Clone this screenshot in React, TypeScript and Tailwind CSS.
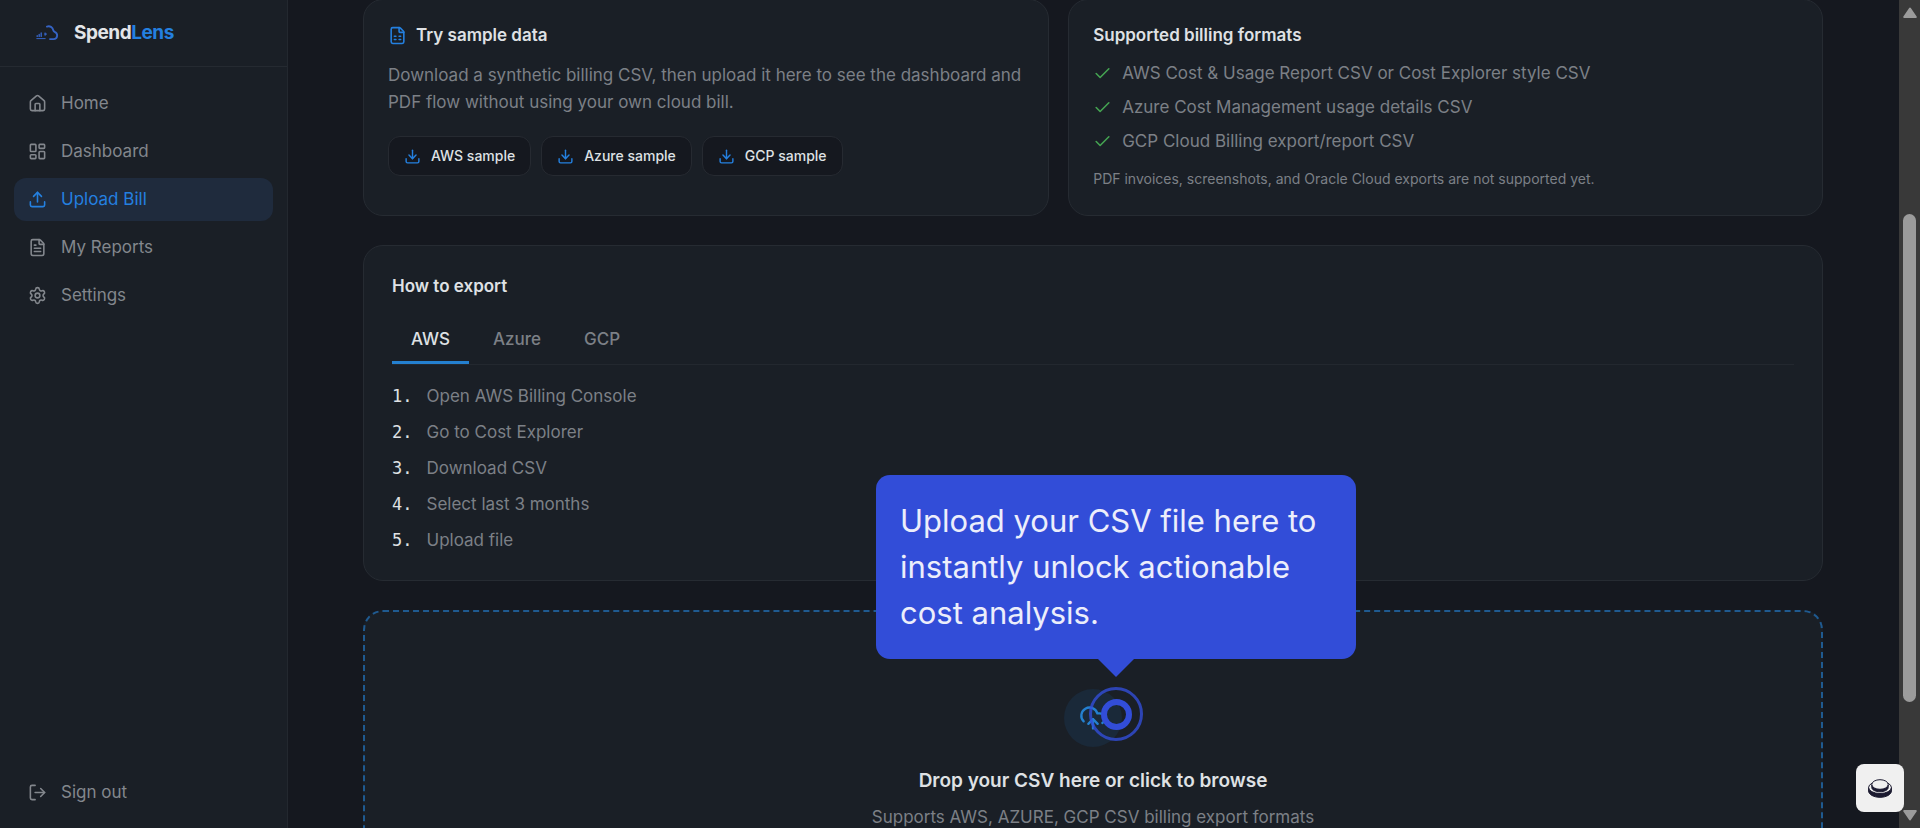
import { useState } from "react"
import {
  Check,
  CloudUpload,
  Download,
  FileSpreadsheet,
  FileText,
  House,
  LayoutDashboard,
  LogOut,
  Settings,
  Upload,
} from "lucide-react"

const navItems = [
  { label: "Home", icon: House },
  { label: "Dashboard", icon: LayoutDashboard },
  { label: "Upload Bill", icon: Upload, active: true },
  { label: "My Reports", icon: FileText },
  { label: "Settings", icon: Settings },
]

const samples = ["AWS sample", "Azure sample", "GCP sample"]

const formats = [
  "AWS Cost & Usage Report CSV or Cost Explorer style CSV",
  "Azure Cost Management usage details CSV",
  "GCP Cloud Billing export/report CSV",
]

const steps: Record<string, string[]> = {
  AWS: ["Open AWS Billing Console", "Go to Cost Explorer", "Download CSV", "Select last 3 months", "Upload file"],
  Azure: ["Open Cost Management", "Go to Cost analysis", "Download CSV", "Select last 3 months", "Upload file"],
  GCP: ["Open Cloud Billing", "Go to Reports", "Download CSV", "Select last 3 months", "Upload file"],
}

function Logo() {
  return (
    <svg viewBox="0 0 24 16" className="h-4 w-6" fill="none" stroke="#3563c4" strokeLinecap="round">
      <path d="M11 1.600c3-1 5.600.6 6.300 3.700.2.900.6 1.200 1.300 1.500 3.900 1.700 3 7.200-1 7.300h-3.600" strokeWidth="1.900" />
      <path d="M.8 13.600h8.400" strokeWidth="1" />
      <path d="M1.200 10.800v.6M3.200 9.400v2M5.200 8v3.400" strokeWidth="1.400" />
      <path d="M8.900 8.200v2.200l1.400-1.100z" fill="#3563c4" strokeWidth="1" />
    </svg>
  )
}

function Sidebar() {
  return (
    <aside className="flex w-72 shrink-0 flex-col border-r border-[#23282f] bg-[#1a1f26]">
      <div className="flex h-[67px] shrink-0 items-center gap-[14px] border-b border-[#252a31] pl-9">
        <Logo />
        <span className="text-[19px] font-bold tracking-tight text-[#e3e5e8]">
          Spend<span className="text-[#2480e0]">Lens</span>
        </span>
      </div>
      <nav className="flex flex-1 flex-col gap-[5px] px-[14px] pt-[15px]">
        {navItems.map(({ label, icon: Icon, active }) => (
          <a
            key={label}
            href="#"
            className={`flex h-[43px] items-center gap-[14px] rounded-xl px-[14px] text-[17px] ${
              active ? "bg-[#1f2b3d] text-[#2480e0]" : "text-[#83878d]"
            }`}
          >
            <Icon size={19} strokeWidth={2} />
            {label}
          </a>
        ))}
      </nav>
      <div className="px-[14px] pb-[14px]">
        <button className="flex h-[43px] w-full items-center gap-[14px] px-[14px] text-[17px] text-[#83878d]">
          <LogOut size={19} strokeWidth={2} />
          Sign out
        </button>
      </div>
    </aside>
  )
}

function SampleCard() {
  return (
    <section className="rounded-[20px] border border-[#262b32] bg-[#1a1f26] px-6 pt-[23px] pb-6">
      <h2 className="flex items-center gap-[9px] text-[17px] leading-6 font-semibold text-[#dfe1e4]">
        <FileSpreadsheet size={19} className="text-[#2480e0]" />
        Try sample data
      </h2>
      <p className="mt-[15px] text-[17px] leading-[27px] text-[#7c8086]">
        Download a synthetic billing CSV, then upload it here to see the dashboard and PDF flow without using your own
        cloud bill.
      </p>
      <div className="mt-5 flex flex-wrap gap-[10px]">
        {samples.map((label) => (
          <button
            key={label}
            className="flex h-10 items-center gap-[10px] rounded-xl border border-[#262a31] bg-[#15181f] px-[15px] text-sm font-medium text-[#dfe1e4]"
          >
            <Download size={17} className="text-[#2480e0]" />
            {label}
          </button>
        ))}
      </div>
    </section>
  )
}

function FormatsCard() {
  return (
    <section className="rounded-[20px] border border-[#262b32] bg-[#1a1f26] px-6 pt-[23px] pb-6">
      <h2 className="text-[17px] leading-6 font-semibold text-[#dfe1e4]">Supported billing formats</h2>
      <ul className="mt-[14px] flex flex-col gap-[10px] text-[17px] leading-6 text-[#7c8086]">
        {formats.map((f) => (
          <li key={f} className="flex items-center gap-[10px]">
            <Check size={19} className="text-[#45a452]" />
            {f}
          </li>
        ))}
      </ul>
      <p className="mt-[14px] text-sm leading-6 text-[#7c8086]">
        PDF invoices, screenshots, and Oracle Cloud exports are not supported yet.
      </p>
    </section>
  )
}

function ExportCard() {
  const [tab, setTab] = useState("AWS")
  return (
    <section className="rounded-[20px] border border-[#262b32] bg-[#1a1f26] px-7 pt-7 pb-7">
      <h2 className="text-[17px] leading-6 font-semibold text-[#dfe1e4]">How to export</h2>
      <div role="tablist" className="mt-5 flex gap-[5px] border-b border-[#23282f]">
        {Object.keys(steps).map((name) => (
          <button
            key={name}
            role="tab"
            aria-selected={tab === name}
            onClick={() => setTab(name)}
            className={`h-[46px] border-b-[3px] px-[19px] text-[17px] font-medium ${
              tab === name ? "border-[#2480d0] text-[#dfe1e4]" : "border-transparent text-[#7c8086]"
            }`}
          >
            {name}
          </button>
        ))}
      </div>
      <ol className="mt-[19px] flex flex-col gap-3 text-[17px] leading-6 text-[#7c8086]">
        {steps[tab].map((step, i) => (
          <li key={step} className="flex gap-[14px]">
            <span className="font-['DejaVu_Sans_Mono',monospace] text-[#dfe1e4]">{i + 1}.</span>
            {step}
          </li>
        ))}
      </ol>
    </section>
  )
}

function TourStep() {
  return (
    <div className="absolute -top-[135px] left-1/2 ml-[23px] flex w-[480px] -translate-x-1/2 flex-col items-center">
      <p className="w-full rounded-[14px] bg-[#324dd8] px-6 py-[23px] text-left text-[31px] leading-[46px] text-[#eceefb]">
        Upload your CSV file here to instantly unlock actionable cost analysis.
      </p>
      <svg viewBox="0 0 36 18" className="h-[18px] w-9" fill="#324dd8">
        <path d="M0 0h36L18 18z" />
      </svg>
      <span className="mt-[10px] flex size-[54px] items-center justify-center rounded-full border-[3px] border-[#324dd8]/80">
        <span className="size-[31px] rounded-full border-[6px] border-[#324dd8]" />
      </span>
    </div>
  )
}

function Dropzone() {
  return (
    <div className="relative">
      <button className="flex w-full flex-col items-center rounded-[20px] border-2 border-dashed border-[#1f5a90] bg-[#1a1f26] px-6 pt-[77px] pb-20">
        <span className="flex size-[58px] items-center justify-center rounded-full bg-[#1a2939]">
          <CloudUpload size={28} className="text-[#2480d0]" />
        </span>
        <span className="mt-5 text-[19px] leading-7 font-semibold text-[#dfe1e4]">Drop your CSV here or click to browse</span>
        <span className="mt-2 text-[17px] leading-7 text-[#7c8086]">Supports AWS, AZURE, GCP CSV billing export formats</span>
      </button>
      <TourStep />
    </div>
  )
}

function Scrollbar() {
  return (
    <div className="flex w-[21px] shrink-0 flex-col items-center bg-[#393939] py-[7px]" aria-hidden="true">
      <svg viewBox="0 0 14 11" className="h-[11px] w-[14px]" fill="#9b9b9b" stroke="#9b9b9b" strokeWidth="2" strokeLinejoin="round">
        <path d="M7 1.500 12.800 10H1.200z" />
      </svg>
      <div className="flex w-[13px] flex-1 flex-col">
        <div className="grow-[196]" />
        <div className="grow-[488] rounded-full bg-[#9b9b9b]" />
        <div className="grow-[108]" />
      </div>
      <svg viewBox="0 0 14 11" className="h-[11px] w-[14px]" fill="#9b9b9b" stroke="#9b9b9b" strokeWidth="2" strokeLinejoin="round">
        <path d="M7 9.500 12.800 1H1.200z" />
      </svg>
    </div>
  )
}

export default function App() {
  return (
    <div className="flex h-screen overflow-hidden bg-[#15181f] font-['Inter',sans-serif]">
      <Sidebar />
      <main className="min-w-0 flex-1 overflow-hidden pr-[76px] pl-[75px]">
        <div className="-mt-px flex flex-col gap-[29px]">
          <div className="grid grid-cols-[1fr_1.1fr] gap-[19px]">
            <SampleCard />
            <FormatsCard />
          </div>
          <ExportCard />
          <Dropzone />
        </div>
      </main>
      <Scrollbar />
      <button
        aria-label="Open demo menu"
        className="fixed right-4 bottom-4 flex size-12 items-center justify-center rounded-lg bg-[#f0f0f0]"
      >
        <svg viewBox="0 0 24 19" className="h-[19px] w-6" stroke="#1b1a30">
          <path d="M.6 8.500v3.500C.6 15.500 5.700 18.300 12 18.300s11.400-2.800 11.400-6.300V8.500z" fill="#1b1a30" />
          <ellipse cx="12" cy="8.500" rx="11.400" ry="6" fill="#f0f0f0" />
          <path d="M3.800 6v2.500c0 2.400 3.700 4.300 8.200 4.300s8.200-1.900 8.200-4.300V6z" fill="#1b1a30" />
          <ellipse cx="12" cy="5.500" rx="8.200" ry="4.800" fill="#f0f0f0" />
        </svg>
      </button>
    </div>
  )
}
